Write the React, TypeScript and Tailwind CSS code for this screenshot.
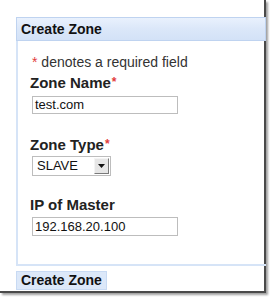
export default function App() {
  return (
    <div className="w-[270px] h-[297px] bg-white font-['Liberation_Sans',Arial,sans-serif]">
      {/* screenshot frame with drop shadow */}
      <div className="w-[266px] h-[293px] bg-white border-r-2 border-b-2 border-[#4a4a4a] shadow-[2px_2px_2px_#a0a0a0] pt-[17px] pl-[16px]">
        <div className="w-[250px]">
          {/* Header */}
          <div className="h-[24px] border border-[#bfd3f0] bg-gradient-to-b from-[#e9f1fd] via-[#dbe7f9] to-[#d3e2f7] pl-[4px] text-[14px] font-bold leading-[22px] text-[#111]">
            Create Zone
          </div>

          {/* Body */}
          <div className="h-[225px] border-l-2 border-b-2 border-[#d6e4f7] pl-[14px] pt-[13px] text-[#222]">
            <p className="text-[14px] leading-[16px] text-[#333]">
              <span className="text-[#e23b3b]">*</span> denotes a required field
            </p>

            <label className="block mt-[4px] ml-[-2px] text-[15px] font-bold leading-[17px]">
              Zone Name<span className="text-[#e23b3b] text-[12px] align-top ml-[1px]">*</span>
            </label>
            <div className="mt-[5px] w-[146px] h-[18px] border border-[#bdbdbd] px-[2px] text-[13px] leading-[16px] text-[#111]">
              test.com
            </div>

            <label className="block mt-[22px] ml-[-2px] text-[15px] font-bold leading-[17px]">
              Zone Type<span className="text-[#e23b3b] text-[12px] align-top ml-[1px]">*</span>
            </label>
            <div className="mt-[3px] w-[79px] h-[20px] border border-[#bdbdbd] flex items-center justify-between pl-[4px] pr-[1px] text-[13px] text-[#111]">
              <span className="leading-[16px]">SLAVE</span>
              <span className="w-[15px] h-[16px] bg-[#e6e6e6] border border-t-[#f4f4f4] border-l-[#f4f4f4] border-r-[#7a7a7a] border-b-[#7a7a7a] flex items-center justify-center">
                <svg width="7" height="4" viewBox="0 0 7 4">
                  <path d="M0 0h7L3.5 4z" fill="#111" />
                </svg>
              </span>
            </div>

            <label className="block mt-[20px] ml-[-2px] text-[15px] font-bold leading-[17px]">
              IP of Master
            </label>
            <div className="mt-[4px] w-[146px] h-[19px] border border-[#bdbdbd] px-[2px] text-[13px] leading-[17px] text-[#111]">
              192.168.20.100
            </div>
          </div>

          {/* Submit */}
          <div className="mt-[5px] w-[91px] h-[19px] border border-[#c8daf3] bg-[#dce8f9] text-[14px] font-bold leading-[17px] text-[#111] pl-[4px]">
            Create Zone
          </div>
        </div>
      </div>
    </div>
  );
}
